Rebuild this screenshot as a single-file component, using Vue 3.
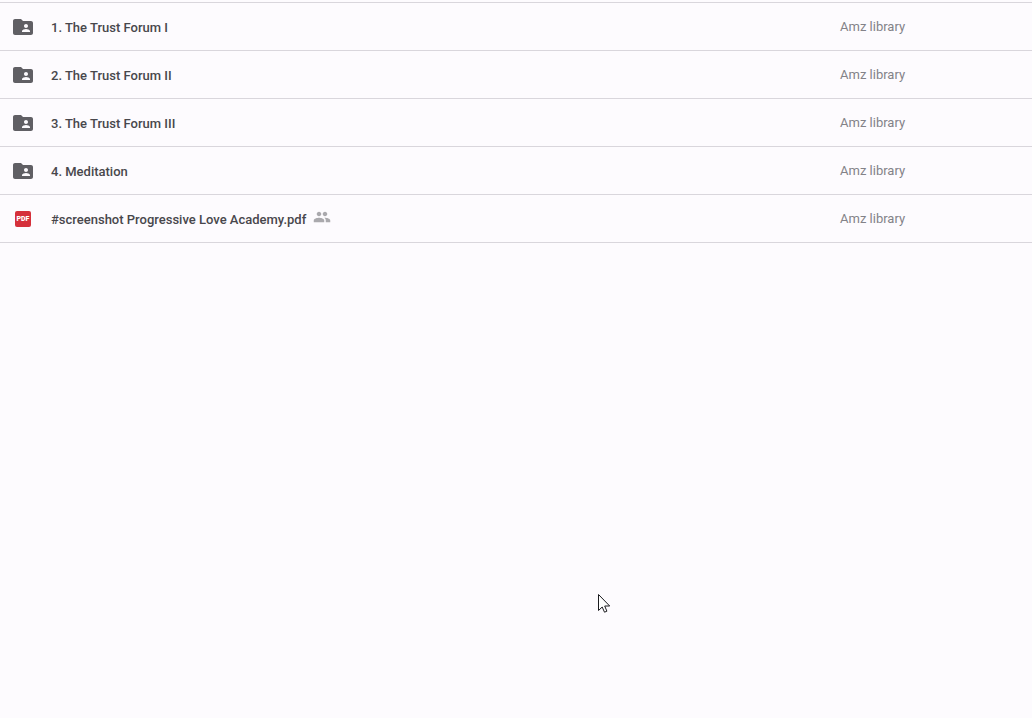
<script setup>
const files = [
  { name: '1. The Trust Forum I', type: 'folder', owner: 'Amz library' },
  { name: '2. The Trust Forum II', type: 'folder', owner: 'Amz library' },
  { name: '3. The Trust Forum III', type: 'folder', owner: 'Amz library' },
  { name: '4. Meditation', type: 'folder', owner: 'Amz library' },
  { name: '#screenshot Progressive Love Academy.pdf', type: 'pdf', owner: 'Amz library', shared: true },
]
</script>

<template>
  <main class="drive">
    <table class="files">
      <tbody>
        <tr v-for="file in files" :key="file.name">
          <td class="name">
            <div class="entry">
              <svg v-if="file.type === 'folder'" class="icon" viewBox="0 0 24 24" aria-hidden="true">
                <path fill="#605f64" d="M20 6h-8l-2-2H4c-1.1 0-1.99.9-1.99 2L2 18c0 1.1.9 2 2 2h16c1.1 0 2-.9 2-2V8c0-1.1-.9-2-2-2zm-5 3c1.1 0 2 .9 2 2s-.9 2-2 2-2-.9-2-2 .9-2 2-2zm4 8h-8v-1c0-1.33 2.67-2 4-2s4 .67 4 2v1z" />
              </svg>
              <span v-else class="icon pdf"><span class="badge">PDF</span></span>
              <span class="title">{{ file.name }}</span>
              <svg v-if="file.shared" class="people" viewBox="0 0 24 24" aria-hidden="true">
                <path fill="#aaa9ad" d="M16 11c1.66 0 2.99-1.34 2.99-3S17.66 5 16 5c-1.66 0-3 1.34-3 3s1.34 3 3 3zm-8 0c1.66 0 2.99-1.34 2.99-3S9.66 5 8 5C6.34 5 5 6.34 5 8s1.34 3 3 3zm0 2c-2.33 0-7 1.17-7 3.5V19h14v-2.5c0-2.33-4.67-3.5-7-3.5zm8 0c-.29 0-.62.02-.97.05 1.16.84 1.97 1.97 1.97 3.45V19h6v-2.5c0-2.33-4.67-3.5-7-3.5z" />
              </svg>
            </div>
          </td>
          <td class="owner">{{ file.owner }}</td>
        </tr>
      </tbody>
    </table>
    <svg class="pointer" viewBox="0 0 12 19" aria-hidden="true">
      <path fill="#fff" stroke="#1b1b1f" d="M.5.5v16l3.7-3.5 2.3 5.2 2.4-1-2.2-5.200h5z" />
    </svg>
  </main>
</template>

<style>
body {
  background: #fdfbfe;
}
</style>

<style scoped>
.drive {
  padding-top: 2px;
  font-family: Roboto, "Liberation Sans", sans-serif;
  font-size: 13px;
  line-height: 20px;
}

.files {
  width: 100%;
  table-layout: fixed;
  border-spacing: 0;
  border-top: 1px solid #d9d6dc;
}

td {
  box-sizing: border-box;
  height: 48px;
  padding: 0;
  border-bottom: 1px solid #d9d6dc;
  vertical-align: middle;
}

.entry {
  display: flex;
  align-items: center;
  height: 46px;
  padding: 1px 0 0 11px;
}

.icon {
  flex: none;
  width: 24px;
  height: 24px;
}

.pdf {
  display: flex;
  align-items: center;
  justify-content: center;
}

.badge {
  width: 16px;
  height: 16px;
  border-radius: 2px;
  background: #d5303b;
  color: #fff;
  font-size: 7px;
  font-weight: 900;
  line-height: 16px;
  text-align: center;
}

.title {
  margin-left: 16px;
  padding-top: 2px;
  color: #48474c;
  font-weight: 500;
  white-space: nowrap;
}

.people {
  flex: none;
  width: 18px;
  height: 18px;
  margin: 0 0 4px 7px;
}

.owner {
  width: 192px;
  color: #838288;
}

.pointer {
  position: fixed;
  top: 594px;
  left: 598px;
  width: 12px;
  height: 19px;
}
</style>
